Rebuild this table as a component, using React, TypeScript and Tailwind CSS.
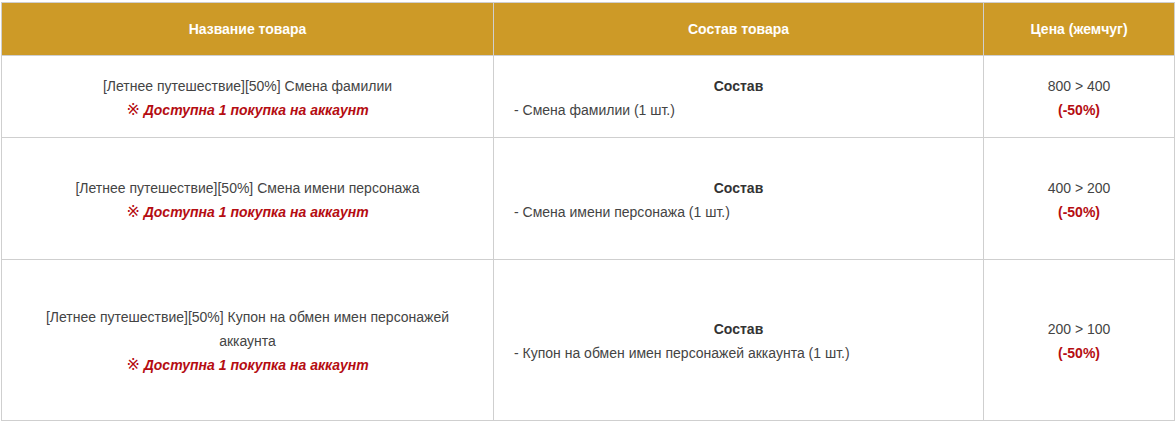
const rows = [
  {
    name: ["[Летнее путешествие][50%] Смена фамилии"],
    item: "- Смена фамилии (1 шт.)",
    price: "800 > 400",
    h: "h-[82px]",
  },
  {
    name: ["[Летнее путешествие][50%] Смена имени персонажа"],
    item: "- Смена имени персонажа (1 шт.)",
    price: "400 > 200",
    h: "h-[122px]",
  },
  {
    name: ["[Летнее путешествие][50%] Купон на обмен имен персонажей", "аккаунта"],
    item: "- Купон на обмен имен персонажей аккаунта (1 шт.)",
    price: "200 > 100",
    h: "h-[161px]",
  },
];

export default function App() {
  return (
    <div className="bg-white w-[1176px] h-[424px] pl-px pt-[2px] font-['Liberation_Sans',Arial,sans-serif] text-[14px] leading-[24px] text-[#444]">
      <table className="border-collapse table-fixed w-[1173px]">
        <colgroup>
          <col className="w-[492px]" />
          <col className="w-[490px]" />
          <col className="w-[191px]" />
        </colgroup>
        <thead>
          <tr className="h-[53px] bg-[#cd9a27] text-white font-bold">
            <th className="border border-[#cfcfcf]">Название товара</th>
            <th className="border border-[#cfcfcf]">Состав товара</th>
            <th className="border border-[#cfcfcf]">Цена (жемчуг)</th>
          </tr>
        </thead>
        <tbody>
          {rows.map((r) => (
            <tr key={r.price} className={r.h}>
              <td className="border border-[#cfcfcf] text-center align-middle px-5 pt-[2px]">
                {r.name.map((n) => (
                  <div key={n}>{n}</div>
                ))}
                <div className="text-[#b50d12]">
                  <span className="font-['DejaVu_Sans',sans-serif] text-[16px]">※</span>{" "}
                  <span className="font-bold italic">Доступна 1 покупка на аккаунт</span>
                </div>
              </td>
              <td className="border border-[#cfcfcf] align-middle px-5 pt-[2px]">
                <div className="text-center font-bold text-[#333]">Состав</div>
                <div>{r.item}</div>
              </td>
              <td className="border border-[#cfcfcf] text-center align-middle pt-[2px]">
                <div>{r.price}</div>
                <div className="text-[#b50d12] font-bold">(-50%)</div>
              </td>
            </tr>
          ))}
        </tbody>
      </table>
    </div>
  );
}
